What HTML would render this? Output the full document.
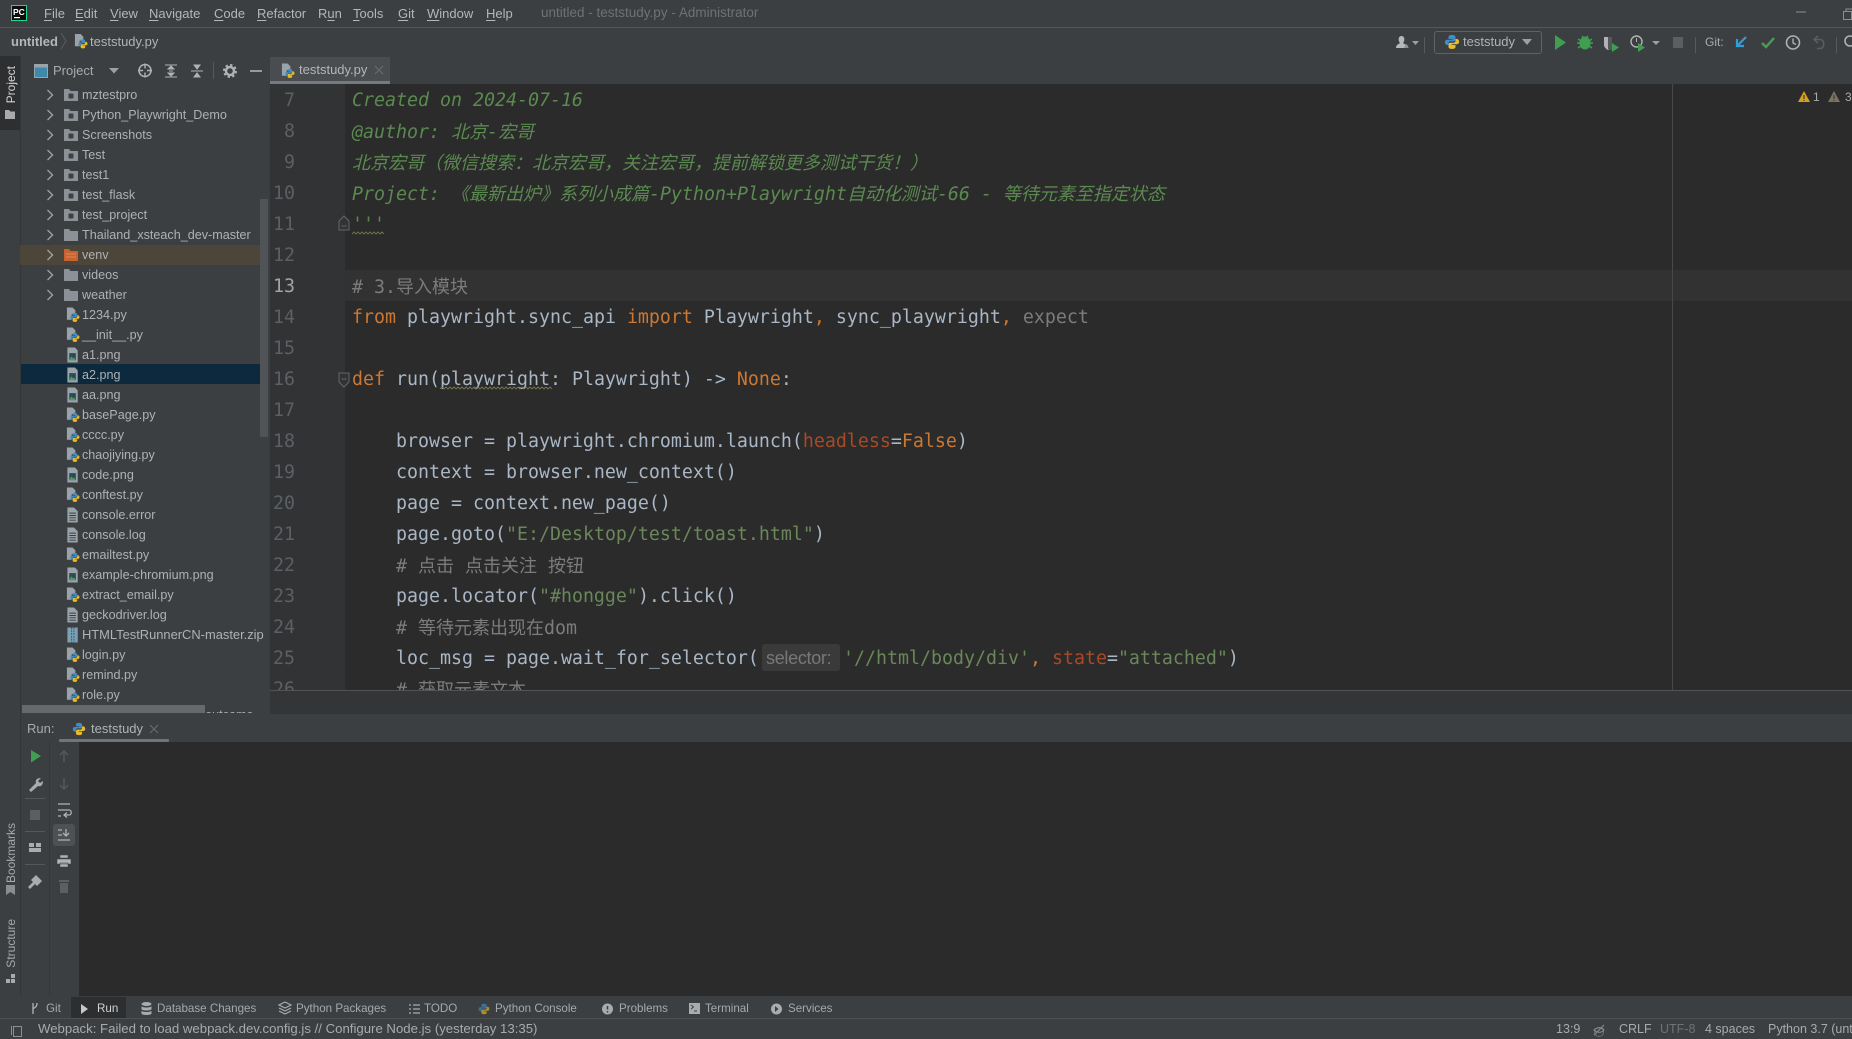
<!DOCTYPE html>
<html><head><meta charset="utf-8"><title>untitled - teststudy.py</title>
<style>
html,body{margin:0;padding:0;background:#3c3f41}
body{position:relative;width:1852px;height:1039px;overflow:hidden;font:13px "Liberation Sans","Noto Sans CJK SC",sans-serif;color:#afb1b3}
.a{position:absolute;white-space:pre}
.b{position:absolute}
.m{top:4px;line-height:20px;color:#b4b6b8}
.m u{text-decoration-thickness:1px;text-underline-offset:2px}
.r{left:82px;line-height:20px;position:absolute;white-space:pre;font-size:12.6px}
.t{top:999px;font-size:11.6px;line-height:20px;position:absolute;white-space:pre;color:#a6a9ab}
.s{top:1019px;line-height:20px;position:absolute;white-space:pre;color:#a8aaac;font-size:12.5px}
.v{position:absolute;writing-mode:vertical-rl;transform:rotate(180deg);font-size:12px;line-height:14px;white-space:pre;color:#a6a9ab}
#code{position:absolute;left:345px;top:84px;width:1507px;height:606px;background:#2b2b2b;overflow:hidden}
#gut{position:absolute;left:270px;top:84px;width:75px;height:606px;background:#313335;overflow:hidden}
.n{position:absolute;left:0;width:25px;text-align:right;font:18.3px/31px "DejaVu Sans Mono",monospace;color:#5c6064;white-space:pre}
.l{position:absolute;left:7px;font:18.27px/31px "DejaVu Sans Mono","Noto Sans CJK SC",monospace;color:#a9b7c6;white-space:pre;letter-spacing:0}
.c{font-family:"Noto Sans CJK SC",sans-serif;font-size:18px;font-weight:400}
.d{color:#5b8a50;font-style:italic}
.g{color:#7c7c7c}
.k{color:#cc7832}
.q{color:#6a8759}
.p{color:#aa4926}
</style></head><body>

<!-- chrome backgrounds -->
<div class="b" style="left:0;top:27px;width:1852px;height:1px;background:#555759"></div>
<div class="b" style="left:0;top:56px;width:20px;height:74px;background:#2d2f30"></div>
<div class="b" style="left:20px;top:56px;width:1px;height:940px;background:#333537"></div>

<!-- title bar -->
<div class="a m" style="left:44px"><u>F</u>ile</div>
<div class="a m" style="left:75px"><u>E</u>dit</div>
<div class="a m" style="left:110px"><u>V</u>iew</div>
<div class="a m" style="left:149px"><u>N</u>avigate</div>
<div class="a m" style="left:214px"><u>C</u>ode</div>
<div class="a m" style="left:257px"><u>R</u>efactor</div>
<div class="a m" style="left:318px">R<u>u</u>n</div>
<div class="a m" style="left:353px"><u>T</u>ools</div>
<div class="a m" style="left:398px"><u>G</u>it</div>
<div class="a m" style="left:427px"><u>W</u>indow</div>
<div class="a m" style="left:486px"><u>H</u>elp</div>
<div class="a" style="left:541px;top:3px;line-height:20px;font-size:13.5px;color:#6f7274">untitled - teststudy.py - Administrator</div>

<!-- nav bar -->
<div class="a" style="left:11px;top:32px;line-height:20px;font-weight:bold;color:#b4b6b8">untitled</div>
<div class="a" style="left:90px;top:32px;line-height:20px;color:#b0b2b4">teststudy.py</div>
<div class="a" style="left:1463px;top:32px;line-height:20px;color:#b0b2b4">teststudy</div>
<div class="a" style="left:1705px;top:32px;line-height:20px;color:#a8aaac;font-size:12px">Git:</div>
<div class="b" style="left:1434px;top:31px;width:106px;height:21px;border:1px solid #5f6263;border-radius:3px"></div>

<!-- project header -->
<div class="a" style="left:53px;top:61px;line-height:20px;color:#a8aaac">Project</div>
<div class="b" style="left:270px;top:57px;width:120px;height:27px;background:#4a4d4f"></div>
<div class="b" style="left:270px;top:81px;width:120px;height:3px;background:#747a80"></div>
<div class="a" style="left:299px;top:60px;line-height:20px;color:#b4b6b8">teststudy.py</div>

<!-- project tree -->
<div class="b" style="left:0;top:84px;width:270px;height:629px;overflow:hidden">
 <div class="b" style="left:20px;top:161px;width:240px;height:20px;background:#4c4539"></div>
 <div class="b" style="left:21px;top:280px;width:247px;height:20px;background:#0d293e"></div>
 <div class="b" style="left:260px;top:115px;width:8px;height:238px;background:#515456"></div>
 <div class="r" style="top:1px">mztestpro</div>
 <div class="r" style="top:21px">Python_Playwright_Demo</div>
 <div class="r" style="top:41px">Screenshots</div>
 <div class="r" style="top:61px">Test</div>
 <div class="r" style="top:81px">test1</div>
 <div class="r" style="top:101px">test_flask</div>
 <div class="r" style="top:121px">test_project</div>
 <div class="r" style="top:141px">Thailand_xsteach_dev-master</div>
 <div class="r" style="top:161px">venv</div>
 <div class="r" style="top:181px">videos</div>
 <div class="r" style="top:201px">weather</div>
 <div class="r" style="top:221px">1234.py</div>
 <div class="r" style="top:241px">__init__.py</div>
 <div class="r" style="top:261px">a1.png</div>
 <div class="r" style="top:281px">a2.png</div>
 <div class="r" style="top:301px">aa.png</div>
 <div class="r" style="top:321px">basePage.py</div>
 <div class="r" style="top:341px">cccc.py</div>
 <div class="r" style="top:361px">chaojiying.py</div>
 <div class="r" style="top:381px">code.png</div>
 <div class="r" style="top:401px">conftest.py</div>
 <div class="r" style="top:421px">console.error</div>
 <div class="r" style="top:441px">console.log</div>
 <div class="r" style="top:461px">emailtest.py</div>
 <div class="r" style="top:481px">example-chromium.png</div>
 <div class="r" style="top:501px">extract_email.py</div>
 <div class="r" style="top:521px">geckodriver.log</div>
 <div class="r" style="top:541px;font-size:12.9px">HTMLTestRunnerCN-master.zip</div>
 <div class="r" style="top:561px">login.py</div>
 <div class="r" style="top:581px">remind.py</div>
 <div class="r" style="top:601px">role.py</div>
 <div class="r" style="top:621px">pytest-htmltest-report-outcome</div>
 <div class="b" style="left:22px;top:621px;width:183px;height:8px;background:#66686a"></div>
</div>

<!-- gutter -->
<div id="gut">
 <div class="n" style="top:1px">7</div>
 <div class="n" style="top:32px">8</div>
 <div class="n" style="top:63px">9</div>
 <div class="n" style="top:94px">10</div>
 <div class="n" style="top:125px">11</div>
 <div class="n" style="top:156px">12</div>
 <div class="n" style="top:187px;color:#a4a3a3">13</div>
 <div class="n" style="top:218px">14</div>
 <div class="n" style="top:249px">15</div>
 <div class="n" style="top:280px">16</div>
 <div class="n" style="top:311px">17</div>
 <div class="n" style="top:342px">18</div>
 <div class="n" style="top:373px">19</div>
 <div class="n" style="top:404px">20</div>
 <div class="n" style="top:435px">21</div>
 <div class="n" style="top:466px">22</div>
 <div class="n" style="top:497px">23</div>
 <div class="n" style="top:528px">24</div>
 <div class="n" style="top:559px">25</div>
 <div class="n" style="top:590px">26</div>
</div>

<!-- editor -->
<div id="code">
 <div class="b" style="left:0;top:186px;width:1507px;height:31px;background:#323232"></div>
 <div class="b" style="left:1327px;top:0;width:1px;height:606px;background:#484848"></div>
 <div class="l d" style="top:1px">Created on 2024-07-16</div>
 <div class="l d" style="top:32px">@author: <span class="c">北京</span>-<span class="c">宏哥</span></div>
 <div class="l d" style="top:63px"><span class="c">北京宏哥（微信搜索：北京宏哥，关注宏哥，提前解锁更多测试干货！）</span></div>
 <div class="l d" style="top:94px">Project: <span class="c">《最新出炉》系列小成篇</span>-Python+Playwright<span class="c">自动化测试</span>-66 - <span class="c">等待元素至指定状态</span></div>
 <div class="l d" style="top:125px">'''</div>
 <div class="l g" style="top:187px"># 3.<span class="c">导入模块</span></div>
 <div class="l" style="top:218px"><span class="k">from</span> playwright.sync_api <span class="k">import</span> Playwright<span class="k">,</span> sync_playwright<span class="k">,</span> <span class="g">expect</span></div>
 <div class="l" style="top:280px"><span class="k">def</span> run(playwright: Playwright) -&gt; <span class="k">None</span>:</div>
 <div class="l" style="top:342px">    browser = playwright.chromium.launch(<span class="p">headless</span>=<span class="k">False</span>)</div>
 <div class="l" style="top:373px">    context = browser.new_context()</div>
 <div class="l" style="top:404px">    page = context.new_page()</div>
 <div class="l" style="top:435px">    page.goto(<span class="q">"E:/Desktop/test/toast.html"</span>)</div>
 <div class="l g" style="top:466px">    # <span class="c">点击</span> <span class="c">点击关注</span> <span class="c">按钮</span></div>
 <div class="l" style="top:497px">    page.locator(<span class="q">"#hongge"</span>).click()</div>
 <div class="l g" style="top:528px">    # <span class="c">等待元素出现在</span>dom</div>
 <div class="l" style="top:559px">    loc_msg = page.wait_for_selector(</div>
 <div class="b" style="left:417px;top:560px;width:78px;height:27px;background:#3a3a3a;border-radius:3px"></div>
 <div class="a" style="left:421px;top:564px;line-height:20px;font-size:18px;color:#787878;letter-spacing:-.3px">selector:</div>
 <div class="l" style="left:498px;top:559px"><span class="q">'//html/body/div'</span><span class="k">,</span> <span class="p">state</span>=<span class="q">"attached"</span>)</div>
 <div class="l g" style="top:590px">    # <span class="c">获取元素文本</span></div>
</div>

<!-- strip under editor -->
<div class="b" style="left:270px;top:690px;width:1582px;height:1px;background:#515355"></div>
<div class="b" style="left:270px;top:691px;width:1582px;height:23px;background:#343537"></div>

<!-- inspections -->
<div class="a" style="left:1813px;top:87px;line-height:20px;font-size:12px;color:#a8aaac">1</div>
<div class="a" style="left:1845px;top:87px;line-height:20px;font-size:12px;color:#a8aaac">3</div>

<!-- run tool window -->
<div class="b" style="left:79px;top:742px;width:1773px;height:254px;background:#2b2b2b"></div>
<div class="a" style="left:27px;top:719px;line-height:20px;color:#a8aaac">Run:</div>
<div class="a" style="left:91px;top:719px;line-height:20px;color:#b0b2b4">teststudy</div>
<div class="b" style="left:59px;top:739px;width:110px;height:3px;background:#70757a;border-radius:1px"></div>
<div class="b" style="left:53px;top:824px;width:22px;height:22px;background:#4d5153;border-radius:3px"></div>
<div class="b" style="left:49px;top:742px;width:1px;height:254px;background:#35373a"></div>

<!-- side strip labels -->
<div class="v" style="left:4px;top:66px;color:#d4d4d4">Project</div>
<div class="v" style="left:4px;top:823px">Bookmarks</div>
<div class="v" style="left:4px;top:919px">Structure</div>

<!-- bottom tool bar -->
<div class="b" style="left:71px;top:997px;width:55px;height:21px;background:#2d2e30"></div>
<div class="b" style="left:0;top:1018px;width:1852px;height:1px;background:#4e5052"></div>
<div class="t" style="left:46px">Git</div>
<div class="t" style="left:97px;color:#d0d2d4">Run</div>
<div class="t" style="left:157px">Database Changes</div>
<div class="t" style="left:296px">Python Packages</div>
<div class="t" style="left:424px">TODO</div>
<div class="t" style="left:495px">Python Console</div>
<div class="t" style="left:619px">Problems</div>
<div class="t" style="left:705px">Terminal</div>
<div class="t" style="left:788px">Services</div>

<!-- status bar -->
<div class="s" style="left:38px;font-size:13.2px">Webpack: Failed to load webpack.dev.config.js // Configure Node.js (yesterday 13:35)</div>
<div class="s" style="left:1556px">13:9</div>
<div class="s" style="left:1619px">CRLF</div>
<div class="s" style="left:1660px;color:#6f7274">UTF-8</div>
<div class="s" style="left:1705px">4 spaces</div>
<div class="s" style="left:1768px">Python 3.7 (untitled)</div>

<!-- icon layer -->
<svg class="b" style="left:0;top:0" width="1852" height="1039" viewBox="0 0 1852 1039" fill="none">
<defs>
<symbol id="logo" viewBox="0 0 16 16" overflow="visible">
 <path d="M8 1C5 1 4.5 2 4.5 3.2V5H8.2v.7H3C1.7 5.7.9 6.8.9 8.2s.8 2.8 2.1 2.8H4.5V9.3C4.5 8 5.5 7.3 6.5 7.3h3.2c1.1 0 1.8-.8 1.8-1.8V3.2C11.5 1.8 10.500 1 8 1z" fill="#3f8dc4"/>
 <path d="M8 15c3 0 3.5-1 3.5-2.2V11H7.8v-.7H13c1.3 0 2.1-1.1 2.1-2.500S14.3 5 13 5h-1.500v1.700c0 1.300-1 2-2 2H6.300c-1.100 0-1.800.8-1.800 1.800v2.300C4.500 14.200 5.500 15 8 15z" fill="#e8bb2c"/>
</symbol>
<symbol id="fold" viewBox="0 0 14 12"><path d="M0 0h5l1.500 2H14v10H0z" fill="#8b9196"/></symbol>
<symbol id="mod" viewBox="0 0 14 12"><path d="M0 0h5l1.500 2H14v10H0z" fill="#8b9196"/><rect x="4.500" y="4.500" width="5" height="5" rx="1" fill="#3c4043"/></symbol>
<symbol id="py" viewBox="0 0 16 16"><path d="M1 0h6l3 3v4H6v6H1z" fill="#9aa3a9"/><use href="#logo" x="4" y="5" width="11" height="11"/></symbol>
<symbol id="img" viewBox="0 0 16 16"><path d="M1.500 0h8l3 3v13h-11z" fill="#9aa3a9"/><rect x="3.500" y="6" width="7" height="7.500" fill="#2a4a55"/><path d="M3.500 13.500l2-4 2 2 1-1 2 3z" fill="#4f9a61"/></symbol>
<symbol id="txt" viewBox="0 0 16 16"><path d="M1.500 0h7l4 4v12h-11z" fill="#9aa3a9"/><path d="M3.500 6h7M3.500 8.500h7M3.500 11h7M3.500 13.500h7" stroke="#3c3f41"/></symbol>
<symbol id="zip" viewBox="0 0 16 16"><rect x="1.500" width="11" height="16" fill="#7d9fb2"/><path d="M6 0v16M8.500 0v16" stroke="#2f5f7a" stroke-dasharray="2 1"/></symbol>
<symbol id="chev" viewBox="0 0 8 12"><path d="M1.500 1l5 5-5 5" stroke="#9da0a2" stroke-width="1.400"/></symbol>
</defs>

<!-- logo -->
<rect x="11.500" y="5.500" width="15" height="15" fill="#0d0d0d" stroke="#21d789"/>
<text x="13" y="15" font-family="Liberation Sans" font-weight="bold" font-size="8.500" fill="#fff">PC</text>
<rect x="14" y="17" width="6" height="1.200" fill="#fff"/>
<!-- window buttons -->
<path d="M1796 12h10" stroke="#8c8f91"/>
<rect x="1843.500" y="11.500" width="8" height="8" stroke="#8c8f91"/><path d="M1846 11v-2h7v8h-2" stroke="#8c8f91"/>

<!-- nav -->
<path d="M61 33l5 8-5 8" stroke="#5b5e60"/>
<use href="#py" x="74" y="34" width="15" height="15"/>
<path d="M1396 48c0-3.500 3-4 4-5-2-2-2-7 1.500-7s3.500 5 1.500 7c1 1 4.500 1.500 4.500 5z" fill="#b5b7b9"/>
<path d="M1404 48h4.500c0-2-1-3-2.500-4z" fill="#8f9193"/>
<path d="M1412 41h7l-3.500 4z" fill="#9da0a2"/>
<path d="M1424.500 37v16" stroke="#565a5c"/>
<use href="#logo" x="1444" y="33" width="16" height="18"/>
<path d="M1522 39h10l-5 6z" fill="#9da0a2"/>
<path d="M1555 35l11 7.500-11 7.500z" fill="#3f9e52"/>
<ellipse cx="1585" cy="43" rx="5.500" ry="6.500" fill="#3f9e52"/>
<path d="M1578 39l3 2M1592 39l-3 2M1577 43h3M1593 43h-3M1578 48l3-2M1592 48l-3-2M1582 36l2 2M1588 36l-2 2" stroke="#3f9e52" stroke-width="1.400"/>
<path d="M1604 37h8v8c0 2-2 4-4 5-2-1-4-3-4-5z" fill="#b0b2b4"/><path d="M1612 37v13l-4-1V37z" fill="#55585a"/>
<path d="M1612 43l7 4.500-7 4.500z" fill="#3f9e52"/>
<circle cx="1636.500" cy="41.500" r="5.500" stroke="#b0b2b4" stroke-width="1.400"/><path d="M1636.500 38v4" stroke="#b0b2b4"/>
<path d="M1638 43l7 4.500-7 4.500z" fill="#3f9e52"/>
<path d="M1652 41h8l-4 4z" fill="#9da0a2"/>
<rect x="1673" y="37" width="10" height="11" fill="#5c5e60"/>
<path d="M1695.500 37v16M1836.500 37v16" stroke="#565a5c"/>
<path d="M1746 37l-8 8M1737 39v7h7" stroke="#2d9ee0" stroke-width="2.200"/>
<path d="M1762 43l4 4 8-9" stroke="#4d9b57" stroke-width="2.400"/>
<circle cx="1793" cy="42.500" r="6.500" stroke="#afb1b3" stroke-width="1.600"/><path d="M1793 38.500v4.500l3 1.500" stroke="#afb1b3" stroke-width="1.400"/>
<path d="M1818 36l-4 3.500 4 3.500M1814 39.500h6c5 0 5 9 0 9h-3" stroke="#5b5e60" stroke-width="1.500"/>
<circle cx="1850" cy="41" r="5" stroke="#afb1b3" stroke-width="1.600"/>

<!-- project strip icon -->
<path d="M5 110h4l1.500 1.500H15V119H5z" fill="#a8aaac"/>
<path d="M6 885h9v10l-4.500-3-4.500 3z" fill="#8b8e90"/>
<rect x="11" y="974" width="4" height="4" fill="#a8aaac"/><rect x="6" y="979" width="4" height="4" fill="#a8aaac"/><rect x="11" y="979" width="4" height="4" fill="#a8aaac"/>

<!-- project header icons -->
<rect x="34.500" y="64.500" width="13" height="13" fill="#3d88ab" stroke="#9aa3a9"/><rect x="35" y="65" width="12" height="2.500" fill="#9aa3a9"/>
<path d="M109 68h10l-5 5.500z" fill="#9da0a2"/>
<circle cx="145" cy="70.500" r="6" stroke="#afb1b3" stroke-width="1.500"/><path d="M145 63.500v5M145 72.500v5M138 70.500h5M147 70.500h5" stroke="#afb1b3" stroke-width="1.400"/>
<path d="M165 65h12M165 77h12M171 66l-3 3h6zM171 76l-3-3h6z" stroke="#afb1b3" fill="#afb1b3"/><path d="M169 71h4" stroke="#afb1b3"/>
<path d="M191 71h12M197 69l-3-4h6zM197 73l-3 4h6z" stroke="#afb1b3" fill="#afb1b3"/>
<path d="M213.500 62v17" stroke="#56595b"/>
<circle cx="230" cy="71" r="4" stroke="#afb1b3" stroke-width="2.500"/><circle cx="230" cy="71" r="6" stroke="#afb1b3" stroke-width="2" stroke-dasharray="2.400 2.300"/>
<path d="M250 71h12" stroke="#afb1b3" stroke-width="1.600"/>

<!-- editor tab icon/close -->
<use href="#py" x="281" y="63" width="15" height="16"/>
<path d="M375 66l8 8M383 66l-8 8" stroke="#6a6e70"/>

<!-- chevrons -->
<use href="#chev" x="46" y="89" width="8" height="12"/><use href="#chev" x="46" y="109" width="8" height="12"/><use href="#chev" x="46" y="129" width="8" height="12"/><use href="#chev" x="46" y="149" width="8" height="12"/><use href="#chev" x="46" y="169" width="8" height="12"/><use href="#chev" x="46" y="189" width="8" height="12"/><use href="#chev" x="46" y="209" width="8" height="12"/><use href="#chev" x="46" y="229" width="8" height="12"/><use href="#chev" x="46" y="249" width="8" height="12"/><use href="#chev" x="46" y="269" width="8" height="12"/><use href="#chev" x="46" y="289" width="8" height="12"/>

<!-- folders -->
<use href="#mod" x="64" y="89" width="14" height="12"/><use href="#mod" x="64" y="109" width="14" height="12"/><use href="#mod" x="64" y="129" width="14" height="12"/><use href="#mod" x="64" y="149" width="14" height="12"/><use href="#mod" x="64" y="169" width="14" height="12"/><use href="#mod" x="64" y="189" width="14" height="12"/><use href="#mod" x="64" y="209" width="14" height="12"/>
<use href="#fold" x="64" y="229" width="14" height="12"/>
<path d="M64 249h5l1.500 2H78v10H64z" fill="#c9622f"/><path d="M66 254h10M66 257h10" stroke="#e08a5a"/>
<use href="#fold" x="64" y="269" width="14" height="12"/><use href="#fold" x="64" y="289" width="14" height="12"/>

<!-- files -->
<use href="#py" x="66" y="307" width="15" height="16"/><use href="#py" x="66" y="327" width="15" height="16"/>
<use href="#img" x="66" y="347" width="15" height="16"/><use href="#img" x="66" y="367" width="15" height="16"/><use href="#img" x="66" y="387" width="15" height="16"/>
<use href="#py" x="66" y="407" width="15" height="16"/><use href="#py" x="66" y="427" width="15" height="16"/><use href="#py" x="66" y="447" width="15" height="16"/>
<use href="#img" x="66" y="467" width="15" height="16"/>
<use href="#py" x="66" y="487" width="15" height="16"/>
<use href="#txt" x="66" y="507" width="15" height="16"/><use href="#txt" x="66" y="527" width="15" height="16"/>
<use href="#py" x="66" y="547" width="15" height="16"/>
<use href="#img" x="66" y="567" width="15" height="16"/>
<use href="#py" x="66" y="587" width="15" height="16"/>
<use href="#txt" x="66" y="607" width="15" height="16"/>
<use href="#zip" x="66" y="627" width="15" height="16"/>
<use href="#py" x="66" y="647" width="15" height="16"/><use href="#py" x="66" y="667" width="15" height="16"/><use href="#py" x="66" y="687" width="15" height="16"/>

<!-- fold markers + squiggles -->
<path d="M339 221l5-5 5 5v9h-10z" fill="#313335" stroke="#63666a"/><path d="M341.500 226h5" stroke="#63666a"/>
<path d="M339 373h10v9l-5 5-5-5z" fill="#313335" stroke="#63666a"/><path d="M341.500 379h5" stroke="#63666a"/>
<path d="M352 234l2-2 2 2 2-2 2 2 2-2 2 2 2-2 2 2 2-2 2 2 2-2 2 2 2-2 2 2 2-2 2 2" stroke="#7f7f50" stroke-width=".8"/>
<path d="M440 389l2-2 2 2 2-2 2 2 2-2 2 2 2-2 2 2 2-2 2 2 2-2 2 2 2-2 2 2 2-2 2 2 2-2 2 2 2-2 2 2 2-2 2 2 2-2 2 2 2-2 2 2 2-2 2 2 2-2 2 2 2-2 2 2 2-2 2 2 2-2 2 2 2-2 2 2 2-2 2 2 2-2 2 2 2-2 2 2 2-2 2 2 2-2 2 2 2-2 2 2 2-2 2 2 2-2 2 2 2-2 2 2" stroke="#7f7f50" stroke-width=".8"/>

<!-- warnings -->
<path d="M1804 91l6 11h-12z" fill="#d2a21a"/><path d="M1804 95v4M1804 100v1" stroke="#2b2b2b"/>
<path d="M1834 91l6 11h-12z" fill="#7c7460"/><path d="M1834 95v4M1834 100v1" stroke="#2b2b2b"/>

<!-- run header -->
<use href="#logo" x="72" y="722" width="14" height="14"/>
<path d="M150 725l8 8M158 725l-8 8" stroke="#6a6e70"/>

<!-- run toolbar col 1 -->
<path d="M31 750l10 6-10 6.500z" fill="#3f9e52"/>
<path d="M29 790l7-7c-1-3 1-5 5-5l-3 3 2 2 3-2c0 4-2 6-5 5l-7 6z" fill="#a9abad"/>
<path d="M25 798.500h20M25 831.500h20M25 864.500h20" stroke="#55585a"/>
<rect x="30" y="810" width="10" height="10" fill="#5c5e60"/>
<path d="M29 843h5v4h-5zM36 843h5v4h-5zM29 848h12v4H29z" fill="#a9abad"/>
<path d="M28 887l5-5-2-2 5-5 6 6-5 5-2-2-5 5z" fill="#a9abad"/>

<!-- run toolbar col 2 -->
<path d="M64 762v-11M60 755l4-4 4 4" stroke="#55585a" stroke-width="1.500"/>
<path d="M64 778v11M60 785l4 4 4-4" stroke="#55585a" stroke-width="1.500"/>
<path d="M58 804h12M58 810h11c3 0 3 5 0 5h-4M67 812.500l-3 2.500 3 2.500M58 816h3" stroke="#afb1b3" stroke-width="1.300"/>
<path d="M58 830h4M58 835h4M58 840h12M66 829v7M63 833l3 3 3-3" stroke="#afb1b3" stroke-width="1.300"/>
<path d="M60 855h8v3h-8zM57 859h14v5H57zM60 863h8v4h-8z" fill="#afb1b3" stroke="#3c3f41" stroke-width=".5"/>
<path d="M59 882h10v-2h-10zM60 883h8v10h-8z" fill="#5c5e60"/>

<!-- bottom tool icons -->
<path d="M33 1003v11M37 1003c0 4-2 4-4 6" stroke="#a9abad" stroke-width="1.400"/>
<path d="M81 1004l7 5-7 5z" fill="#c5c7c9"/>
<ellipse cx="146.500" cy="1004" rx="5" ry="2" fill="#a9abad"/><path d="M141.500 1006c0 2 10 2 10 0v3c0 2-10 2-10 0zM141.500 1010.500c0 2 10 2 10 0v3c0 2-10 2-10 0z" fill="#a9abad"/>
<path d="M285 1002l6 3-6 3-6-3zM279 1008l6 3 6-3M279 1011l6 3 6-3" stroke="#a9abad" fill="none" stroke-width="1.200"/>
<path d="M409 1005h2M409 1009h2M409 1013h2M413 1005h7M413 1009h7M413 1013h7" stroke="#a9abad" stroke-width="1.300"/>
<use href="#logo" x="478" y="1003" width="12" height="12"/>
<rect x="478" y="1003" width="12" height="12" fill="#3c3f41" opacity=".35"/>
<circle cx="607.500" cy="1009" r="5.500" fill="#a9abad"/><path d="M607.500 1006v3.500M607.500 1011v1.500" stroke="#3c3f41" stroke-width="1.500"/>
<rect x="689" y="1003" width="11" height="11" fill="#a9abad"/><path d="M691 1005l2.500 2-2.500 2M694 1011h3" stroke="#3c3f41"/>
<circle cx="776.500" cy="1009" r="5.500" fill="#a9abad"/><path d="M775 1006l3.500 3-3.500 3z" fill="#3c3f41"/>

<!-- status icons -->
<rect x="13.500" y="1026.500" width="8" height="10" stroke="#8c8f91"/><path d="M11.500 1035v-9" stroke="#8c8f91"/>
<path d="M1594 1030c3-3 8-3 10 0-2 3-7 3-10 0zM1594 1035l10-10" stroke="#8c8f91"/>
<circle cx="1599" cy="1032" r="4.500" stroke="#8c8f91" opacity=".6"/>
</svg>
</body></html>
